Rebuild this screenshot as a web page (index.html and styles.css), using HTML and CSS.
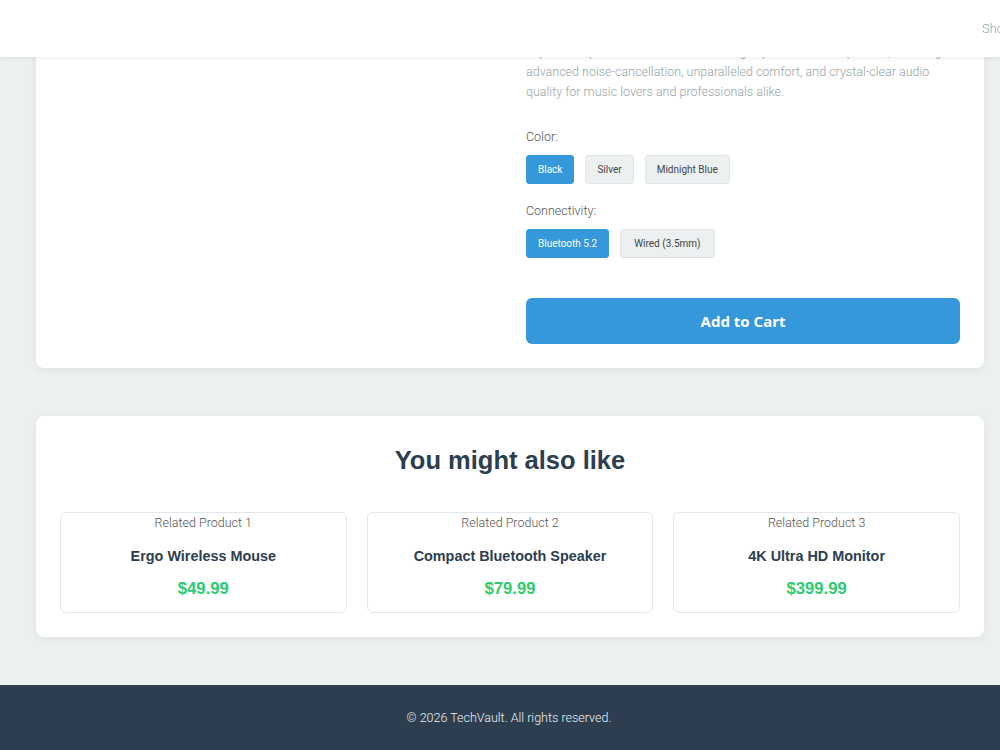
FILE: index.html
```html
<!DOCTYPE html>
<html lang="en">
<head>
<meta charset="utf-8">
<title>TechVault – Product</title>
<link rel="stylesheet" href="styles.css">
</head>
<body>
<header class="site-header">
  <nav class="nav">
    <a class="nav-link" href="#">Shop</a>
    <a class="nav-link" href="#">Deals</a>
    <a class="nav-link" href="#">Support</a>
  </nav>
</header>

<main class="page">
  <section class="card product">
    <div class="product-media"></div>
    <div class="product-info">
      <p class="desc">Experience premium sound with our flagship wireless headphones, featuring advanced noise-cancellation, unparalleled comfort, and crystal-clear audio quality for music lovers and professionals alike.</p>

      <div class="option-group">
        <div class="option-label">Color:</div>
        <div class="options">
          <button class="opt active">Black</button>
          <button class="opt">Silver</button>
          <button class="opt">Midnight Blue</button>
        </div>
      </div>

      <div class="option-group">
        <div class="option-label">Connectivity:</div>
        <div class="options">
          <button class="opt active">Bluetooth 5.2</button>
          <button class="opt opt-wide">Wired (3.5mm)</button>
        </div>
      </div>

      <button class="cart-btn">Add to Cart</button>
    </div>
  </section>

  <section class="card related">
    <h2 class="related-title">You might also like</h2>
    <div class="related-grid">
      <div class="rel-item">
        <span class="rel-img">Related Product 1</span>
        <div class="rel-name">Ergo Wireless Mouse</div>
        <div class="rel-price">$49.99</div>
      </div>
      <div class="rel-item">
        <span class="rel-img">Related Product 2</span>
        <div class="rel-name">Compact Bluetooth Speaker</div>
        <div class="rel-price">$79.99</div>
      </div>
      <div class="rel-item">
        <span class="rel-img">Related Product 3</span>
        <div class="rel-name">4K Ultra HD Monitor</div>
        <div class="rel-price">$399.99</div>
      </div>
    </div>
  </section>
</main>

<footer class="site-footer">© 2026 TechVault. All rights reserved.</footer>
</body>
</html>
```

FILE: styles.css
```css
html, body {
  margin: 0;
  padding: 0;
  overflow: hidden;
}
body {
  background: #ecf0f1;
  font-family: Roboto, "Liberation Sans", Arial, sans-serif;
  font-weight: 300;
  color: #333;
}

.site-header {
  position: fixed;
  top: 0;
  left: 0;
  right: 0;
  height: 57px;
  background: #fff;
  box-shadow: 0 2px 4px rgba(0, 0, 0, 0.06);
  overflow: hidden;
  z-index: 10;
}
.nav {
  display: flex;
  gap: 24px;
  height: 100%;
  align-items: center;
  padding-left: 982px;
  white-space: nowrap;
}
.nav-link {
  font-size: 13px;
  color: #95a5a6;
  text-decoration: none;
}

.page {
  padding: 18px 16px 48px 36px;
  width: 948px;
  display: flex;
  flex-direction: column;
  gap: 48px;
}

.card {
  background: #fff;
  border-radius: 8px;
  box-shadow: 0 2px 8px rgba(0, 0, 0, 0.06);
}

.product {
  display: grid;
  grid-template-columns: 1fr 1fr;
  gap: 32px;
  padding: 24px;
}
.product-info {
  display: flex;
  flex-direction: column;
}
.desc {
  margin: 0;
  font-size: 12.5px;
  line-height: 20px;
  color: #95a5a6;
}
.option-group {
  margin-top: 25px;
}
.option-group + .option-group {
  margin-top: 17px;
}
.option-label {
  font-size: 12.5px;
  line-height: 20px;
  color: #555;
}
.options {
  display: flex;
  gap: 11px;
  margin-top: 8px;
}
.opt {
  font-family: Roboto, sans-serif;
  font-weight: 400;
  font-size: 10px;
  height: 29px;
  padding: 0 11px;
  border: 1px solid #e1e5e7;
  background: #ecf0f1;
  color: #444;
  border-radius: 3px;
}
.opt-wide {
  padding: 0 13px;
}
.opt.active {
  background: #3498db;
  border-color: #3498db;
  color: #fff;
}
.cart-btn {
  margin-top: 40px;
  height: 46px;
  border: none;
  border-radius: 6px;
  background: #3498db;
  color: #fff;
  font-family: "Noto Sans", sans-serif;
  font-weight: 700;
  font-size: 15px;
}

.related {
  padding: 29px 24px 24px;
}
.related-title {
  margin: 0 0 37px;
  text-align: center;
  font-family: "Liberation Sans", Arial, sans-serif;
  font-size: 25.5px;
  line-height: 30px;
  font-weight: 700;
  color: #2c3e50;
}
.related-grid {
  display: grid;
  grid-template-columns: repeat(3, 1fr);
  gap: 20px;
}
.rel-item {
  box-sizing: border-box;
  border: 1px solid #e3e6e8;
  border-radius: 6px;
  height: 101px;
  display: flex;
  flex-direction: column;
  align-items: center;
}
.rel-img {
  font-size: 12.5px;
  line-height: 20px;
  color: #555;
}
.rel-name {
  margin-top: 14px;
  font-family: "Liberation Sans", Arial, sans-serif;
  font-size: 14.4px;
  font-weight: 700;
  line-height: 18px;
  color: #2c3e50;
}
.rel-price {
  margin-top: 15px;
  font-family: "Liberation Sans", Arial, sans-serif;
  font-size: 16.7px;
  font-weight: 700;
  line-height: 18px;
  color: #2ecc71;
}

.site-footer {
  background: #2c3e50;
  color: #ecf0f1;
  text-align: center;
  font-size: 12.5px;
  line-height: 18px;
  padding: 24px 0 23px 18px;
}
```
